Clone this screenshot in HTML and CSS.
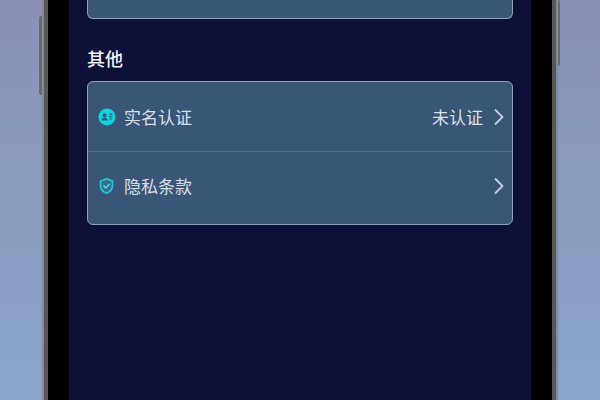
FILE: index.html
```html
<!DOCTYPE html>
<html lang="zh-CN">
<head>
<meta charset="utf-8">
<title>其他</title>
<link rel="stylesheet" href="styles.css">
</head>
<body>
<div class="wallpaper">
  <div class="phone">
    <span class="side-button side-left"></span>
    <span class="side-button side-right"></span>
    <main class="screen">
      <div class="card-stub"></div>
      <h2 class="section-title">其他</h2>
      <section class="card">
        <div class="row row-divided">
          <svg class="row-icon" viewBox="0 0 18 18" aria-hidden="true">
            <circle cx="9" cy="9" r="8.5" fill="#12d3e2"/>
            <circle cx="6.6" cy="7.2" r="2" fill="#2a5a7c"/>
            <path d="M3.4 12.6c.3-2 1.6-3 3.2-3s2.9 1 3.2 3z" fill="#2a5a7c"/>
            <path d="M11 6.2h3.4M11 8.6h3.4M11.4 11h2.6" stroke="#2a5a7c" stroke-width="1.2" fill="none"/>
          </svg>
          <span class="row-label">实名认证</span>
          <span class="row-value">未认证</span>
          <svg class="chevron" viewBox="0 0 12 18" aria-hidden="true">
            <path d="M2 1.5l7.5 7.5L2 16.5" fill="none" stroke="#c3d0de" stroke-width="1.8"/>
          </svg>
        </div>
        <div class="row row-last">
          <svg class="row-icon" viewBox="0 0 18 18" aria-hidden="true">
            <path d="M8.5 1.8l6 2.2v4.8c0 3.4-2.5 6-6 7.5-3.5-1.5-6-4.1-6-7.5V4z" fill="#35708f" stroke="#22c6d4" stroke-width="1.7"/>
            <path d="M5.5 8.5l2.3 2.3 3.8-3.8" fill="none" stroke="#4fdbe2" stroke-width="1.6"/>
          </svg>
          <span class="row-label">隐私条款</span>
          <svg class="chevron" viewBox="0 0 12 18" aria-hidden="true">
            <path d="M2 1.5l7.5 7.5L2 16.5" fill="none" stroke="#c3d0de" stroke-width="1.8"/>
          </svg>
        </div>
      </section>
    </main>
  </div>
</div>
</body>
</html>
```
FILE: styles.css
```css
* { box-sizing: border-box; }
html, body { margin: 0; height: 100%; }
body {
  width: 600px;
  height: 400px;
  overflow: hidden;
  font-family: "Noto Sans CJK SC", "Noto Sans", sans-serif;
}
.wallpaper {
  height: 400px;
  padding: 0 42px;
  display: flex;
  background: linear-gradient(180deg, #8a90b6 0%, #8a9cc0 50%, #8aa6ca 100%);
}
.phone {
  position: relative;
  flex: 1;
  display: flex;
  padding: 0 25px;
  background: #000;
  border-left: 2px solid #7f8ba0;
  border-right: 2px solid #7f8ba0;
  box-shadow: inset 4px 0 0 #5a5854, inset -4px 0 0 #5a5854;
}
.side-button {
  position: absolute;
  width: 3px;
  background: #6a6a68;
}
.side-left { left: -5px; top: 16px; height: 79px; border-radius: 2px 0 0 2px; }
.side-right { right: -4px; top: 0; height: 66px; border-radius: 0 2px 2px 0; width: 2px; }
.screen {
  flex: 1;
  min-width: 0;
  background: #0d1038;
  padding: 0 18px;
}
.card-stub {
  height: 19px;
  background: #3a5676;
  border: 1px solid #8fa3bb;
  border-top: 0;
  border-radius: 0 0 6px 6px;
}
.section-title {
  margin: 0;
  height: 62px;
  padding-top: 25px;
  font-size: 18px;
  line-height: 28px;
  font-weight: 500;
  color: #f0f2f6;
}
.card {
  height: 144px;
  background: #3a5676;
  border: 1px solid #8fa3bb;
  border-radius: 6px;
  display: flex;
  flex-direction: column;
}
.row {
  display: flex;
  align-items: center;
  padding: 0 7px 0 10px;
  flex: none;
}
.row-divided { height: 70px; border-bottom: 1px solid #517090; }
.row-last { height: 69px; padding-bottom: 2px; }
.row-icon { width: 18px; height: 18px; flex: none; margin-right: 8px; }
.row-label { flex: 1; font-size: 17px; line-height: 24px; color: #d8dfe8; }
.row-value { font-size: 17px; line-height: 24px; color: #d8dfe8; margin-right: 10px; }
.chevron { width: 12px; height: 18px; flex: none; }
```
